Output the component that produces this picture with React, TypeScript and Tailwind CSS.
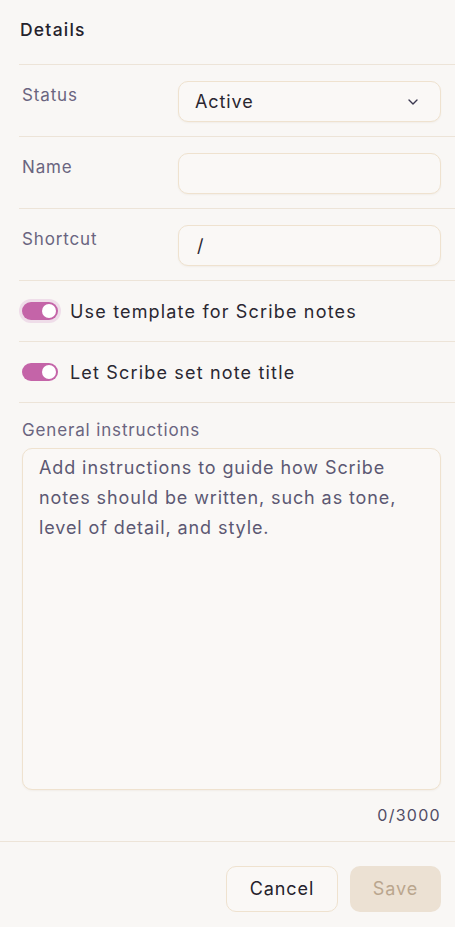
import React, { useState } from 'react'

function Toggle ({ focused }: { focused?: boolean }): React.ReactElement {
  return (
    <span className={`flex h-[18px] w-[36px] shrink-0 items-center justify-end rounded-full bg-[#c464a8] px-[2px] ${focused ? 'ring-[3px] ring-[#efdde9]' : ''}`}>
      <span className="h-[14px] w-[14px] rounded-full bg-white" />
    </span>
  )
}

function Row ({ label, children }: { label: string, children: React.ReactNode }): React.ReactElement {
  return (
    <div className="flex border-b border-[#ede4d8] pt-4 pb-[14px] pl-[3px] pr-[14px]">
      <div className="w-[156px] pt-[2px] text-[17px] tracking-[0.05em] text-[#6a6580]">{label}</div>
      <div className="flex-1">{children}</div>
    </div>
  )
}

export default function App (): React.ReactElement {
  const [text, setText] = useState('')

  return (
    <div className="min-h-[927px] bg-[#f9f7f5] font-['Inter','Noto_Sans',sans-serif] text-[#24212b]">
      <div className="pl-[19px]">
        <h2 className="border-b border-[#ede4d8] pt-[17px] pb-[21px] pl-[1px] text-[17.5px] font-medium tracking-[0.07em] text-[#25222c]">Details</h2>

        <Row label="Status">
          <div className="flex h-[41px] items-center justify-between rounded-[10px] border border-[#efe2cf] bg-[#faf8f6] pl-4 pr-[22px] shadow-[0_1px_2px_rgba(120,90,40,0.06)]">
            <span className="text-[18px] tracking-[0.05em] text-[#2a2731]">Active</span>
            <svg width="10" height="6" viewBox="0 0 10 6" fill="none" stroke="#3b3850" strokeWidth="1.4" strokeLinecap="round" strokeLinejoin="round">
              <path d="M1 1l4 4 4-4" />
            </svg>
          </div>
        </Row>

        <Row label="Name">
          <div className="h-[41px] rounded-[10px] border border-[#efe2cf] bg-[#faf8f6] shadow-[0_1px_2px_rgba(120,90,40,0.06)]" />
        </Row>

        <Row label="Shortcut">
          <div className="flex h-[41px] items-center rounded-[10px] border border-[#efe2cf] bg-[#faf8f6] pl-[18px] text-[18px] text-[#2a2731] shadow-[0_1px_2px_rgba(120,90,40,0.06)]">/</div>
        </Row>

        <div className="flex h-[61px] items-center gap-[12px] border-b border-[#ede4d8] pl-[3px]">
          <Toggle focused />
          <span className="text-[18px] tracking-[0.065em] text-[#2a2731]">Use template for Scribe notes</span>
        </div>

        <div className="flex h-[61px] items-center gap-[12px] border-b border-[#ede4d8] pl-[3px]">
          <Toggle />
          <span className="text-[18px] tracking-[0.065em] text-[#2a2731]">Let Scribe set note title</span>
        </div>

        <div className="pl-[3px] pr-[14px] pt-[15px] pb-[14px]">
          <div className="text-[17px] tracking-[0.05em] text-[#6a6580]">General instructions</div>
          <textarea
            value={text}
            onChange={(e) => { setText(e.target.value) }}
            placeholder="Add instructions to guide how Scribe notes should be written, such as tone, level of detail, and style."
            className="mt-[4px] block h-[342px] w-full resize-none rounded-[10px] border border-[#efe2cf] bg-[#faf8f6] px-4 py-[4px] text-[18px] leading-[30px] tracking-[0.05em] text-[#2a2731] placeholder:text-[#5c5873] shadow-[0_1px_2px_rgba(120,90,40,0.06)] focus:outline-none"
          />
          <div className="mt-[13px] text-right text-[16px] tracking-[0.08em] text-[#514d66]">{text.length}/3000</div>
        </div>
      </div>

      <div className="flex justify-end gap-3 border-t border-[#ede4d8] px-[14px] pt-[24px] pb-[15px]">
        <button className="h-[46px] w-[112px] rounded-[10px] border border-[#efe2cf] bg-[#faf8f6] text-[18px] tracking-[0.05em] text-[#25222c]">Cancel</button>
        <button className="h-[46px] w-[91px] rounded-[10px] bg-[#ece1d3] text-[18px] tracking-[0.05em] text-[#baa68e]">Save</button>
      </div>
    </div>
  )
}
